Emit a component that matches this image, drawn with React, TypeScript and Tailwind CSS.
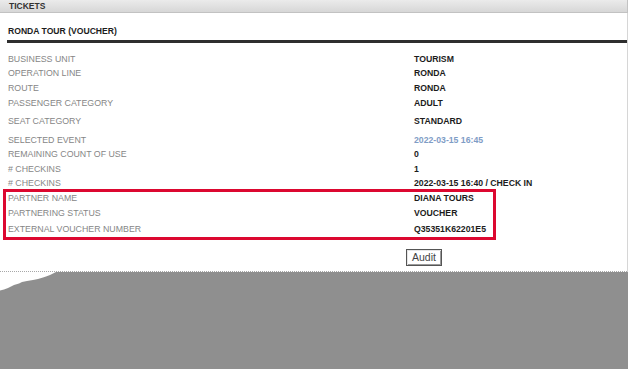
import React from "react";

type Row = { label: string; value: string; mt: string; blue?: boolean };

const rows: Row[] = [
  { label: "BUSINESS UNIT", value: "TOURISM", mt: "mt-0" },
  { label: "OPERATION LINE", value: "RONDA", mt: "mt-[0.3px]" },
  { label: "ROUTE", value: "RONDA", mt: "mt-[0.4px]" },
  { label: "PASSENGER CATEGORY", value: "ADULT", mt: "mt-px" },
  { label: "SEAT CATEGORY", value: "STANDARD", mt: "mt-[4.3px]" },
  { label: "SELECTED EVENT", value: "2022-03-15 16:45", mt: "mt-[5.5px]", blue: true },
  { label: "REMAINING COUNT OF USE", value: "0", mt: "mt-0" },
  { label: "# CHECKINS", value: "1", mt: "mt-px" },
  { label: "# CHECKINS", value: "2022-03-15 16:40 / CHECK IN", mt: "mt-0" },
];

const partnerRows: Row[] = [
  { label: "PARTNER NAME", value: "DIANA TOURS", mt: "mt-0" },
  { label: "PARTNERING STATUS", value: "VOUCHER", mt: "mt-px" },
  { label: "EXTERNAL VOUCHER NUMBER", value: "Q35351K62201E5", mt: "mt-[1.7px]" },
];

function DataRow({ r }: { r: Row }) {
  return (
    <div className={`grid grid-cols-[406px_1fr] h-[14px] items-center leading-[14px] ${r.mt}`}>
      <span className="text-[8.8px] text-[#868686]">{r.label}</span>
      <span
        className={`text-[8.7px] font-bold ${r.blue ? "text-[#7f9dc6]" : "text-[#1c1c1c]"}`}
      >
        {r.value}
      </span>
    </div>
  );
}

export default function App() {
  return (
    <div className="w-[628px] h-[369px] bg-white flex flex-col overflow-hidden font-['Liberation_Sans',Arial,sans-serif]">
      <div className="h-[13px] shrink-0 border-b border-r border-[#c2c2c2] bg-gradient-to-b from-[#ebebeb] to-[#d7d7d7] pl-[9px] text-[8.5px] font-bold text-[#333] leading-[12px]">
        TICKETS
      </div>
      <div className="h-[259px] shrink-0 flex flex-col border-r border-[#d6d6d6]">
        <div className="mt-[11.3px] pl-[8px] h-[14px] leading-[14px] text-[8.6px] font-bold text-[#1c1c1c]">
          RONDA TOUR (VOUCHER)
        </div>
        <div className="mt-[1.7px] ml-[7px] h-[3px] bg-[#2e2e2e]" />
        <div className="mt-[9px] pl-[8px] flex flex-col">
          {rows.map((r, i) => (
            <DataRow key={i} r={r} />
          ))}
          <div className="relative mt-[1px]">
            <span className="absolute left-[-5px] top-[-2px] w-[493px] bottom-[-4px] border-[3px] border-[#dc0830] pointer-events-none" />
            {partnerRows.map((r, i) => (
              <DataRow key={i} r={r} />
            ))}
          </div>
        </div>
        <div className="mt-[8px] pl-[406px]">
          <button className="w-[36px] h-[17px] border border-[#555] bg-white text-[10.5px] leading-[13px] text-[#444] shadow-[inset_1px_1px_0_#e6e6e6,inset_-1px_-1px_0_#9a9a9a]">
            Audit
          </button>
        </div>
        <div className="flex-1 border-b border-dotted border-[#a8a8a8]" />
      </div>
      <div className="relative flex-1 bg-[#8f8f8f]">
        <svg className="absolute left-0 top-0" width="60" height="20" viewBox="0 0 60 20">
          <path
            d="M0 0 L56 0 L53 1.5 L50 3 L46 4.5 L43 5.5 L38 7 L33 8 L27 9 L22 10 L19 11.5 L14 13 L11 14.5 L8 16 L4 17.5 L0 18.5 Z"
            fill="#ffffff"
          />
        </svg>
      </div>
    </div>
  );
}
